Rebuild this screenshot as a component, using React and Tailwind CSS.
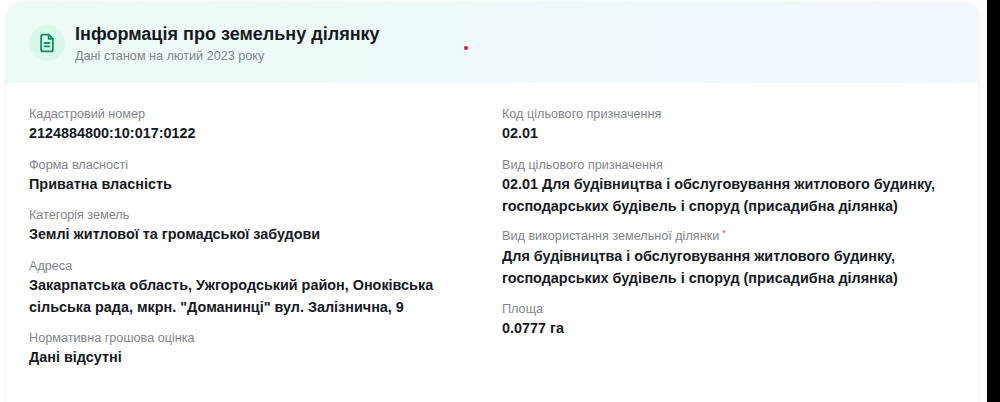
import React from 'react';

const Field = ({ label, value, star }) => (
  <div className={star ? 'mb-[11.5px]' : 'mb-[12.5px]'}>
    <div className={`text-[12.65px] ${star ? 'leading-[15px]' : 'leading-[16px]'} text-[#7f858c]`}>
      {label}
      {star && <span className="relative -top-[4px] ml-[3px] text-[9px] text-[#e0526a]">*</span>}
    </div>
    <div className="text-[14.4px] leading-[22px] font-bold text-[#15191f]">{value}</div>
  </div>
);

const left = [
  { label: 'Кадастровий номер', value: '2124884800:10:017:0122' },
  { label: 'Форма власності', value: 'Приватна власність' },
  { label: 'Категорія земель', value: 'Землі житлової та громадської забудови' },
  { label: 'Адреса', value: 'Закарпатська область, Ужгородський район, Оноківська сільська рада, мкрн. "Доманинці" вул. Залізнична, 9' },
  { label: 'Нормативна грошова оцінка', value: 'Дані відсутні' }
];

const right = [
  { label: 'Код цільового призначення', value: '02.01' },
  { label: 'Вид цільового призначення', value: '02.01 Для будівництва і обслуговування житлового будинку, господарських будівель і споруд (присадибна ділянка)' },
  { label: 'Вид використання земельної ділянки', value: 'Для будівництва і обслуговування житлового будинку, господарських будівель і споруд (присадибна ділянка)', star: true },
  { label: 'Площа', value: '0.0777 га' }
];

const App = () => {
  return (
    <div className="relative flex h-[402px] w-[1000px] overflow-hidden bg-black font-['Liberation_Sans',Arial,sans-serif]">
      <div className="h-full w-[987px] bg-white pl-[7px] pt-[2px]">
        <div className="h-[420px] w-[971px] overflow-hidden rounded-2xl bg-white shadow-[0_0_6px_rgba(0,0,0,0.08)]">
          <div className="flex h-[81px] items-center gap-[10px] bg-gradient-to-r from-[#ecfaf5] to-[#f0f7fe] pl-[22px]">
            <div className="flex h-[36px] w-[36px] items-center justify-center rounded-full bg-[#d9f8e8]">
              <svg width="20" height="20" viewBox="0 0 24 24" fill="none" stroke="#0a8f66" strokeWidth="2.2" strokeLinecap="round" strokeLinejoin="round">
                <path d="M14 2H7a2 2 0 0 0-2 2v16a2 2 0 0 0 2 2h10a2 2 0 0 0 2-2V7z" />
                <path d="M14 2v5h5" />
                <path d="M9 12h6M9 16h6" />
              </svg>
            </div>
            <div>
              <h2 className="text-[18.05px] leading-[26px] font-bold text-[#15191f]">Інформація про земельну ділянку</h2>
              <p className="text-[12.65px] leading-[18px] text-[#7f858c]">Дані станом на лютий 2023 року</p>
            </div>
          </div>
          <div className="grid grid-cols-[473px_438px] px-[22px] pt-[23px]">
            <div className="pr-[30px]">
              {left.map(f => <Field key={f.label} {...f} />)}
            </div>
            <div>
              {right.map(f => <Field key={f.label} {...f} />)}
            </div>
          </div>
        </div>
      </div>
      <div className="absolute left-[464px] top-[46px] h-[4px] w-[4px] rounded-full bg-[#d3163c]" />
    </div>
  );
};

export default App;
